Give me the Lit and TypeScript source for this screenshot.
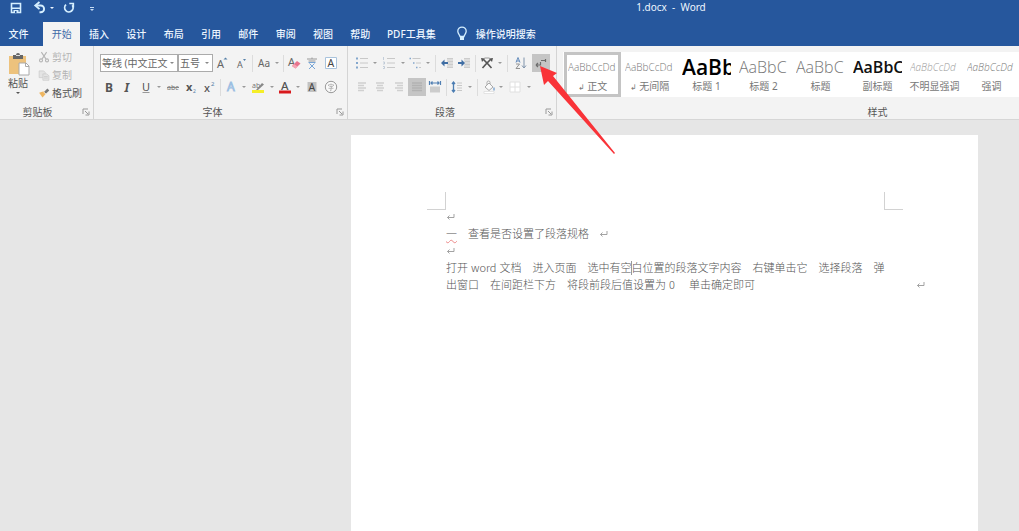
import { LitElement, html, svg, css, TemplateResult, SVGTemplateResult } from "lit";
import { customElement, property } from "lit/decorators.js";
import { classMap } from "lit/directives/class-map.js";

const ICONS: Record<string, SVGTemplateResult> = {
  save: svg`<path d="M3.500 3.500h9v9h-9z" fill="none" stroke="#d5efff" stroke-width="1.600"/><path d="M4 7.500h8v1.500H4zM5.500 10h5v3h-5z" fill="#d5efff"/><path d="M7 11h1.500v2H7z" fill="#26579d"/>`,
  undo: svg`<path d="M4.500 5.500h4.200a3.300 3.300 0 0 1 0 6.800H7.500" fill="none" stroke="#d5efff" stroke-width="1.900"/><path d="M7.500 2L3.300 5.500l4.200 3.600" fill="none" stroke="#d5efff" stroke-width="1.900"/>`,
  redo: svg`<path d="M5 4.700A4.200 4.200 0 1 0 11.300 5.300" fill="none" stroke="#d5efff" stroke-width="1.800"/><path d="M8.300 3.500h4v4" fill="none" stroke="#d5efff" stroke-width="1.700"/>`,
  more: svg`<path d="M6 7h4v1H6zM6 9h4L8 11z" fill="#c5dcf4"/>`,
  bulb: svg`<path d="M6 10.500C6 8.800 3.800 8 3.800 5.300a4.200 4.200 0 0 1 8.400 0C12.200 8 10 8.800 10 10.500z" fill="none" stroke="#d5efff" stroke-width="1.300"/><path d="M6 11h4v3H6z" fill="#d5efff"/>`,
  cut: svg`<g fill="none" stroke="#b3b3b3" stroke-width="1.400"><path d="M4.500 1.500l6 9M11.500 1.500l-6 9"/><circle cx="4" cy="12.500" r="2"/><circle cx="12" cy="12.500" r="2"/></g>`,
  copy: svg`<g fill="#e4e4e4" stroke="#cbcbcb"><path d="M1.500 2.500h6l2 2v7h-8z"/><path d="M6.500 6.500h5l3 2.500v6h-8z"/><path d="M8 10h5M8 12h5"/></g>`,
  brush: svg`<path d="M1.500 7.500l6-2 3 3.500-4.500 5z" fill="#eeb661"/><path d="M8 6.500L12.500 2l2.500 2.500L10.500 9z" fill="#777"/><path d="M7 6l3.500 3.500" stroke="#fff"/>`,
  growA: svg`<text x="3" y="13" font-size="11" fill="#666">A</text><path d="M9.500 4.500l2-2 2 2z" fill="#5580a8"/>`,
  shrinkA: svg`<text x="4" y="13" font-size="9" fill="#666">A</text><path d="M10 4h3l-1.500 2z" fill="#5580a8"/>`,
  changeCase: svg`<text x="2" y="12" font-size="10" fill="#666">Aa</text>`,
  clear: svg`<text x="2" y="11" font-size="11" fill="#666">A</text><path d="M6 11l5-5 3.500 2.500-5 5z" fill="#e9738d"/><path d="M6 11l2-2 3.500 2.600-2 2z" fill="#f4a4b4"/>`,
  phonetic: svg`<path d="M3 4h10M8 2.500V4M4.500 6h7" stroke="#999"/><path d="M4.500 7.500h7M5 14l5.500-5.500M5.500 8.500L11 14" fill="none" stroke="#78a5d5"/>`,
  boxA: svg`<path d="M2.500 2.500h11v11h-11z" fill="#fff" stroke="#a9c3dc"/><text x="4.500" y="12" font-size="10.500" fill="#444">A</text>`,
  bold: svg`<text x="4" y="12.500" font-size="12" font-weight="700" fill="#555">B</text>`,
  italic: svg`<text x="5.500" y="12.500" font-size="12" font-weight="700" font-style="italic" fill="#555">I</text>`,
  underline: svg`<text x="4" y="11.500" font-size="11" fill="#555">U</text><path d="M4.500 13.500h7" stroke="#999"/>`,
  strike: svg`<text x="2" y="11" font-size="7" fill="#777">abc</text><path d="M2 8.500h12" stroke="#888"/>`,
  sub: svg`<text x="3" y="11.500" font-size="11" font-weight="700" fill="#555">x</text><text x="10" y="13.500" font-size="5" fill="#5580a8">2</text>`,
  sup: svg`<text x="3" y="12.500" font-size="11" font-weight="500" fill="#555">x</text><text x="10" y="6.500" font-size="6" fill="#5580a8">2</text>`,
  effect: svg`<text x="4" y="12" font-size="12" fill="#e4f0fb" stroke="#9dbfe2" stroke-width=".9">A</text>`,
  highlight: svg`<path d="M2 11h12v3H2z" fill="#f5ee28"/><text x="2" y="9" font-size="7" fill="#777">ab</text><path d="M6 11l6-7 2 1.500L8 11z" fill="#888"/>`,
  fontColor: svg`<text x="4" y="11" font-size="11.500" font-weight="500" fill="#555">A</text><path d="M2 11.500h12v3H2z" fill="#d8191d"/>`,
  shadeA: svg`<path d="M3.500 3h9v10h-9z" fill="#c2c2c2"/><text x="4.500" y="12" font-size="10.500" fill="#444">A</text>`,
  circled: svg`<circle cx="8" cy="8" r="5.700" fill="#f9f9f9" stroke="#999"/><path d="M5.500 7V5.800h5V7M8 4.500v1.200M6.500 7.500h3L8 8.700M5.500 9.300h5M8 8.700v3H7" fill="none" stroke="#aaa" stroke-width=".8"/>`,
  bullets: svg`<path d="M2 3.500h2M2 8h2M2 12.500h2" stroke="#84a7cd" stroke-width="2"/><path d="M6 3.500h8M6 8h8M6 12.500h8" stroke="#c8c8c8"/>`,
  numbers: svg`<path d="M2.500 2v3M2 7h1.500v2H2M2 11.500h1.500v2H2" fill="none" stroke="#b5c3d2" stroke-width=".8"/><path d="M6 3.500h8M6 8h8M6 12.500h8" stroke="#c8c8c8"/>`,
  multi: svg`<path d="M1.500 3.500h1.500M5 8h1.500M8 12.500h1.500" stroke="#84a7cd" stroke-width="1.500"/><path d="M4.500 3.500h8M8 8h5M11 12.500h2" stroke="#c8c8c8"/>`,
  outdent: svg`<path d="M8 3h6v10H8z" fill="#ddd"/><path d="M8 3.500h6M9 6.500h5M9 9.500h5M8 12.500h6" stroke="#ccc"/><path d="M2 8l3.500-3.500V7H9v2H5.500v2.500z" fill="#3f6da3"/>`,
  indent: svg`<path d="M8 3h6v10H8z" fill="#ddd"/><path d="M8 3.500h6M9 6.500h5M9 9.500h5M8 12.500h6" stroke="#ccc"/><path d="M9 8L5.500 4.500V7H2v2h3.500v2.500z" fill="#3f6da3"/>`,
  asian: svg`<path d="M3.500 13L8 8l4.500 5M4.500 4.500L8 8l3.500-3.500" fill="none" stroke="#555" stroke-width="1.600"/><path d="M5.500 3h5" stroke="#999"/><path d="M2 3l4 .5L3 7zM14 3l-4 .5L13 7z" fill="#555"/>`,
  sort: svg`<path d="M3 7.500l2-5 2 5M3.700 6h2.600" fill="none" stroke="#5580b5" stroke-width=".9"/><path d="M3 9h3.500L3 13.500h4" fill="none" stroke="#888" stroke-width=".9"/><path d="M11 2.500v10M9 10.500l2 2.500 2-2.500" fill="none" stroke="#7f93ab"/>`,
  marks: svg`<path d="M8 5.500h4.500M12.500 4v3M3 10h4.500V7M3 10l2-2M3 10l2 2" fill="none" stroke="#6c6c6c" stroke-width="1.200"/>`,
  left: svg`<path d="M4 4h8M4 6.500h6M4 9h8M4 11.500h6" stroke="#d0d0d0" stroke-width="1.500"/>`,
  center: svg`<path d="M4 4h8M5 6.500h6M4 9h8M5 11.500h6" stroke="#d0d0d0" stroke-width="1.500"/>`,
  right: svg`<path d="M4 4h8M6 6.500h6M4 9h8M6 11.500h6" stroke="#d0d0d0" stroke-width="1.500"/>`,
  justify: svg`<path d="M3 4h10M3 6.500h10M3 9h10M3 11.500h10" stroke="#b2b2b2" stroke-width="1.500"/>`,
  distribute: svg`<path d="M2.500 2v4M13.500 2v4M4 4h8M5.500 2.500L4 4l1.500 1.500M10.500 2.500L12 4l-1.500 1.500" fill="none" stroke="#5280b3" stroke-width="1.200"/><path d="M3 7.500h10v6H3z" fill="#ccc"/>`,
  spacing: svg`<path d="M4.500 3v10M3 5l1.500-2L6 5M3 11l1.500 2L6 11" fill="none" stroke="#4b7db2" stroke-width="1.300"/><path d="M8 4h5M8 6.500h5M8 9h5M8 11.500h5" stroke="#c8c8c8"/>`,
  bucket: svg`<path d="M4 8l4-4 4 4-4 3.500zM6 6V3.500a1.500 1.500 0 0 1 3 0V5" fill="#fafafa" stroke="#aaa"/><path d="M13 8.500v3" stroke="#83a8d1" stroke-width="1.500"/><path d="M3 12.500h10v2H3z" fill="#fff" stroke="#d5d5d5" stroke-width=".6"/>`,
  borders: svg`<path d="M3 3h10v10H3zM8 3v10M3 8h10" fill="#fff" stroke="#e0e0e0"/>`,
};

const icon = (name: string) => html`<svg class="icon" viewBox="0 0 16 16" aria-hidden="true">${ICONS[name]}</svg>`;

@customElement("tool-row")
class ToolRow extends LitElement {
  @property() items = "";

  static styles = css`
    :host { display: contents; }
    button { position: relative; border: 0; padding: 0; margin: 0; height: 18px; min-width: 0; background: none; display: flex; align-items: center; justify-content: center; font-family: inherit; }
    .on { background: #c5c5c5; }
    .icon { width: 16px; height: 16px; flex: none; }
    .caret::before { content: ""; border: 2px solid transparent; border-top-color: #999; border-bottom: 0; }
    .sep { width: 1px; height: 17px; background: #dcdcdc; justify-self: center; align-self: center; }
    .pointer { position: absolute; left: 8px; top: 12px; width: 76px; height: 90px; z-index: 5; pointer-events: none; }
  `;

  render() {
    return this.items.split(" ").map((name) => {
      if (name === "|") return html`<span class="sep"></span>`;
      if (name === "v") return html`<button class="caret" aria-label="更多选项"></button>`;
      return html`<button aria-label=${name} class=${classMap({ on: name === "marks" || name === "justify" })}>
        ${icon(name)}
        ${name === "marks"
          ? html`<svg class="pointer" viewBox="0 0 76 90" aria-hidden="true"><path d="M0 0L4 19L8 15L74 88L75 87L13 10L17 7Z" fill="#f93338"/></svg>`
          : ""}
      </button>`;
    });
  }
}

const TABS = ["开始", "插入", "设计", "布局", "引用", "邮件", "审阅", "视图", "帮助"];

const STYLES = [
  { preview: "AaBbCcDd", name: "正文", kind: "small", mark: true },
  { preview: "AaBbCcDd", name: "无间隔", kind: "small", mark: true },
  { preview: "AaBb", name: "标题 1", kind: "h1", mark: false },
  { preview: "AaBbC", name: "标题 2", kind: "h2", mark: false },
  { preview: "AaBbC", name: "标题", kind: "h2", mark: false },
  { preview: "AaBbC", name: "副标题", kind: "sub", mark: false },
  { preview: "AaBbCcDd", name: "不明显强调", kind: "em", mark: false },
  { preview: "AaBbCcDd", name: "强调", kind: "em strong", mark: false },
];

@customElement("app-root")
class AppRoot extends LitElement {
  static styles = css`
    :host { display: flex; flex-direction: column; min-height: 100vh; overflow: hidden; background: #e6e6e6; color: #555; font: 10px/14px "Noto Sans", "Noto Sans CJK SC", sans-serif; }
    * { box-sizing: border-box; }
    button { border: 0; padding: 0; margin: 0; background: none; color: inherit; font: inherit; }
    .icon { width: 16px; height: 16px; flex: none; display: block; }
    header { background: #26579d; color: #eef6ff; }
    .titlebar { display: grid; grid-template-columns: 323px 1fr; height: 22px; }
    .quick { display: flex; align-items: flex-start; padding-left: 8px; }
    .quick .wide { margin-left: 8px; }
    .quick .next { margin-left: 5px; }
    .quick .end { margin-left: 7px; }
    .drop { width: 8px; height: 16px; display: flex; align-items: center; justify-content: center; }
    .drop::before { content: ""; border: 2px solid transparent; border-top-color: currentColor; border-bottom: 0; }
    h1 { margin: 0; text-align: center; font-size: 10px; line-height: 14px; font-weight: 400; }
    nav { display: flex; height: 24px; font-weight: 500; white-space: nowrap; }
    .file { width: 43px; padding-right: 6px; }
    .tabs { display: grid; grid-template-columns: repeat(9, 1fr); width: 336px; }
    .tabs .active { background: #f3f3f3; color: #3c6aa8; font-weight: 400; }
    .pdf { padding: 0 6px 0 8px; }
    .tell { display: flex; align-items: center; gap: 6px; margin-left: 12px; }
    .ribbon { display: flex; height: 74px; background: #f3f3f3; border-bottom: 1px solid #d6d6d6; }
    .group { flex: none; display: flex; flex-direction: column; justify-content: space-between; border-right: 1px solid #d4d4d4; padding-top: 8px; margin: 0; }
    .label { display: flex; height: 14px; align-items: center; justify-content: center; position: relative; }
    .launch { position: absolute; right: 3px; top: 3px; width: 8px; height: 8px; }
    .launch svg { display: block; width: 8px; height: 8px; }
    .clip { width: 94px; padding-top: 3px; }
    .clip .label { padding-right: 18px; }
    .clipbody { display: flex; gap: 2px; }
    .paste { width: 36px; padding-top: 3px; display: flex; flex-direction: column; align-items: center; }
    .paste svg { width: 24px; height: 24px; }
    .paste .drop { height: 6px; }
    .cmds { display: flex; flex-direction: column; gap: 2px; }
    .cmd { display: flex; align-items: center; height: 16px; }
    .cmd .icon { width: 12px; height: 12px; margin-right: 2px; }
    .off { color: #b3b3b3; }
    .font { width: 254px; padding-left: 6px; }
    .font .label { padding-right: 22px; }
    .para { width: 209px; padding-left: 4px; }
    .para .label { padding-right: 18px; }
    .rows { display: grid; gap: 6px; }
    .row { display: grid; height: 18px; align-items: center; }
    .f1 { grid-template-columns: 78px 35px 18px 20px 2px 21px 6px 6px 16px 19px 19px; }
    .f2 { grid-template-columns: 17px 19px 19px 8px 19px 17px 19px 4px 18px 8px 20px 8px 18px 8px 19px 19px; }
    .p1 { grid-template-columns: 19px 8px 20px 8px 17px 8px 6px 17px 18px 5px 18px 8px 6px 22px 18px; }
    .p2 { grid-template-columns: 19px 18px 19px 18px 18px 4px 18px 8px 6px 17px 8px 20px 8px; }
    .pick { position: relative; display: block; height: 18px; }
    select { appearance: none; width: 100%; height: 18px; margin: 0; padding: 0 0 0 1px; border: 1px solid #ababab; border-radius: 0; background: #fff; color: #666; font: inherit; }
    .pick::after { content: ""; position: absolute; right: 4px; top: 8px; border: 2px solid transparent; border-top-color: #888; border-bottom: 0; }
    .gallery { flex: 1; min-width: 0; display: flex; flex-direction: column; justify-content: space-between; padding: 6px 0 0 6px; }
    .gallery .label { padding-left: 173px; }
    .list { display: flex; background: #fff; height: 45px; overflow: hidden; padding-left: 1px; }
    .style { flex: none; width: 57px; height: 45px; border: 3px solid transparent; color: #777; display: flex; flex-direction: column; align-items: center; }
    .style.sel { border-color: #c4c4c4; }
    .preview { width: 51px; height: 24px; padding: 0 1px; line-height: 24px; overflow: hidden; white-space: nowrap; text-align: left; font-family: "Open Sans", "Noto Sans", sans-serif; font-weight: 300; }
    .preview span { display: block; overflow: hidden; }
    .small, .em { font-size: 10px; }
    .em { font-style: italic; color: #999; }
    .strong { color: #777; }
    .h1 { font-size: 21px; font-weight: 600; color: #000; }
    .h2 { font-size: 16px; }
    .sub { font-size: 16px; font-weight: 600; color: #111; }
    .name { white-space: nowrap; }
    .name i { font-style: normal; font-size: 8px; }
    main { flex: 1; display: flex; padding: 15px 41px 0 351px; }
    .page { flex: 1; min-width: 0; background: #fff; padding: 57px 75px 0 76px; color: #555; font-size: 11px; line-height: 17px; }
    .crops { display: flex; justify-content: space-between; height: 16px; }
    .crop { width: 19px; height: 18px; border-bottom: 1px solid #d2d2d2; }
    .crop:first-child { border-right: 1px solid #d2d2d2; }
    .crop:last-child { border-left: 1px solid #d2d2d2; }
    .text { padding-left: 19px; margin-right: -22px; font-family: "Noto Sans CJK SC", sans-serif; font-weight: 300; }
    .text p { margin: 0; height: 17px; white-space: nowrap; display: flex; align-items: center; }
    .latin { margin: 0 3px; }
    .wavy { text-decoration: underline wavy #ec8a8a 1px; text-underline-offset: 1px; }
    .ret { width: 9px; height: 8px; }
    .after { margin-left: 10px; }
    .far { margin-left: auto; }
    .cursor { width: 1px; height: 14px; margin-right: -1px; background: #999; }
  `;

  private label(text: string, launcher = true): TemplateResult {
    return html`<div class="label">${text}${launcher
      ? html`<button class="launch" aria-label="${text}设置"><svg viewBox="0 0 8 8"><path d="M1 6V1h5M3 3l3 3M7 3.500V7H3.500" fill="none" stroke="#999"/></svg></button>`
      : ""}</div>`;
  }

  private ret(extra = "") {
    return html`<svg class="ret ${extra}" viewBox="0 0 9 8" aria-hidden="true"><path d="M8 1v3.500H1.500M3.500 2.500l-2 2 2 2" fill="none" stroke="#999" stroke-width=".9"/></svg>`;
  }

  render() {
    return html`
      <header>
        <div class="titlebar">
          <div class="quick">
            <button aria-label="保存">${icon("save")}</button>
            <button class="wide" aria-label="撤消">${icon("undo")}</button>
            <button class="drop" aria-label="撤消列表"></button>
            <button class="next" aria-label="重复">${icon("redo")}</button>
            <button class="end" aria-label="自定义">${icon("more")}</button>
          </div>
          <h1>1.docx&nbsp; -&nbsp; Word</h1>
        </div>
        <nav>
          <button class="file">文件</button>
          <div class="tabs">${TABS.map((t, i) => html`<button class=${classMap({ active: i === 0 })}>${t}</button>`)}</div>
          <button class="pdf">PDF工具集</button>
          <button class="tell">${icon("bulb")}操作说明搜索</button>
        </nav>
      </header>
      <div class="ribbon">
        <section class="group clip">
          <div class="clipbody">
            <button class="paste">
              <svg viewBox="0 0 24 24" aria-hidden="true"><path d="M3 4h17v18H3z" fill="#edc27d"/><path d="M7 3h3a2 2 0 0 1 4 0h3v4H7z" fill="#666"/><path d="M10 3h4v1h-4z" fill="#ddd"/><path d="M13 11h7l3 3v9H13z" fill="#fff" stroke="#aaa"/><path d="M19.500 11v3.500H23" fill="none" stroke="#aaa"/></svg>
              粘贴<span class="drop"></span>
            </button>
            <div class="cmds">
              <button class="cmd off">${icon("cut")}剪切</button>
              <button class="cmd off">${icon("copy")}复制</button>
              <button class="cmd">${icon("brush")}格式刷</button>
            </div>
          </div>
          ${this.label("剪贴板")}
        </section>
        <section class="group font">
          <div class="rows">
            <div class="row f1">
              <label class="pick"><select aria-label="字体"><option>等线 (中文正文</option></select></label>
              <label class="pick"><select aria-label="字号"><option>五号</option></select></label>
              <tool-row items="growA shrinkA | changeCase v | clear phonetic boxA"></tool-row>
            </div>
            <div class="row f2"><tool-row items="bold italic underline v strike sub sup | effect v highlight v fontColor v shadeA circled"></tool-row></div>
          </div>
          ${this.label("字体")}
        </section>
        <section class="group para">
          <div class="rows">
            <div class="row p1"><tool-row items="bullets v numbers v multi v | outdent indent | asian v | sort marks"></tool-row></div>
            <div class="row p2"><tool-row items="left center right justify distribute | spacing v | bucket v borders v"></tool-row></div>
          </div>
          ${this.label("段落")}
        </section>
        <section class="gallery">
          <div class="list">
            ${STYLES.map((s, i) => html`<button class="style ${i === 0 ? "sel" : ""}">
              <span class="preview ${s.kind}"><span>${s.preview}</span></span>
              <span class="name">${s.mark ? html`<i>↲</i> ` : ""}${s.name}</span>
            </button>`)}
          </div>
          ${this.label("样式", false)}
        </section>
      </div>
      <main>
        <article class="page">
          <div class="crops"><span class="crop"></span><span class="crop"></span></div>
          <div class="text">
            <p>${this.ret()}</p>
            <p><span class="wavy">一</span>　查看是否设置了段落规格${this.ret("after")}</p>
            <p>${this.ret()}</p>
            <p>打开<span class="latin">word</span>文档　进入页面　选中有空<span class="cursor"></span>白位置的段落文字内容　右键单击它　选择段落　弹</p>
            <p>出窗口　在间距栏下方　将段前段后值设置为<span class="latin">0</span>　单击确定即可${this.ret("far")}</p>
          </div>
        </article>
      </main>
    `;
  }
}
